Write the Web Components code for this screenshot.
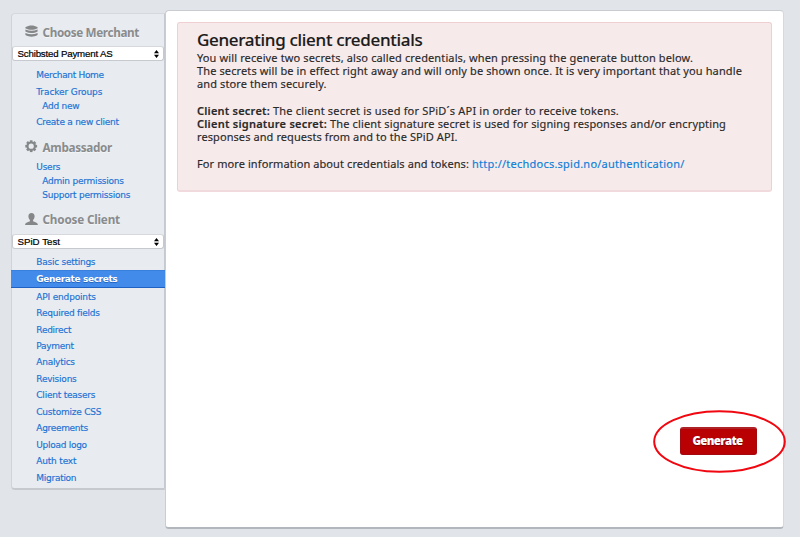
<!DOCTYPE html>
<html lang="en">
<head>
<meta charset="utf-8">
<title>Generate secrets</title>
<style>
html,body{margin:0;height:100%}
body{background:#e1e5ea;overflow:hidden;font-family:"Noto Sans","Open Sans",sans-serif}
</style>
</head>
<body>
<app-shell>
  <side-bar slot="side">
    <side-heading icon="layers" w="96.5">Choose Merchant</side-heading>
    <select-box w="95">Schibsted Payment AS</select-box>
    <nav-group style="--top:5px;--bottom:3px">
      <nav-link w="67.5" style="--h:17.5px">Merchant Home</nav-link>
      <nav-link w="66" style="--h:16px">Tracker Groups</nav-link>
      <nav-link w="37" sub style="--h:13px">Add new</nav-link>
      <nav-link w="82.5" style="--h:18px">Create a new client</nav-link>
    </nav-group>
    <side-heading icon="gear" w="69.5" style="--h:26px">Ambassador</side-heading>
    <nav-group style="--bottom:2px">
      <nav-link w="24" style="--h:14.5px">Users</nav-link>
      <nav-link w="81.5" sub style="--h:14px">Admin permissions</nav-link>
      <nav-link w="88" sub style="--h:14px">Support permissions</nav-link>
    </nav-group>
    <side-heading icon="user" w="77.5" style="--h:30px">Choose Client</side-heading>
    <select-box w="42.5">SPiD Test</select-box>
    <nav-group style="--top:5px">
      <nav-link w="59">Basic settings</nav-link>
      <nav-link w="81" active style="--h:18px">Generate secrets</nav-link>
      <nav-link w="59.5">API endpoints</nav-link>
      <nav-link w="63.5">Required fields</nav-link>
      <nav-link w="35">Redirect</nav-link>
      <nav-link w="37.5">Payment</nav-link>
      <nav-link w="38.5">Analytics</nav-link>
      <nav-link w="40.3">Revisions</nav-link>
      <nav-link w="59">Client teasers</nav-link>
      <nav-link w="65">Customize CSS</nav-link>
      <nav-link w="51.5">Agreements</nav-link>
      <nav-link w="50.5">Upload logo</nav-link>
      <nav-link w="40">Auth text</nav-link>
      <nav-link w="40">Migration</nav-link>
    </nav-group>
  </side-bar>
  <main-panel slot="main">
    <info-box></info-box>
    <action-button slot="action">Generate</action-button>
  </main-panel>
</app-shell>
<script>
const define = (name, html, setup) => customElements.define(name, class extends HTMLElement {
  connectedCallback() {
    if (this.shadowRoot) return;
    const t = document.createElement('template');
    t.innerHTML = html(this);
    this.attachShadow({mode: 'open'}).appendChild(t.content.cloneNode(true));
    if (setup) setup(this);
  }
});

/* Tracks a run of text so that it fills the width in its w attribute. */
define('fit-text', () => `<style>:host{display:inline-block;white-space:pre}</style><slot></slot>`, el => {
  const w = parseFloat(el.getAttribute('w'));
  const n = [...el.textContent].length;
  el.style.letterSpacing = '0px';
  const natural = el.getBoundingClientRect().width;
  if (w && natural) el.style.letterSpacing = ((w - natural) / n).toFixed(4) + 'px';
});

define('app-shell', () => `<style>
:host{display:grid;grid-template-columns:154px 619px;padding:10px 0 0 11px;align-items:start}
.side{padding-top:3px}
</style><div class="side"><slot name="side"></slot></div><slot name="main"></slot>`);

define('side-bar', () => `<style>
:host{display:block;box-sizing:border-box;height:477px;padding-top:3px;background:#e8ebf0;border:1px solid #d0d4da;border-top-color:#d5d8dd;border-bottom:2px solid #c6cacf;border-right-color:#c5cad1;border-radius:4px 0 0 4px}
</style><slot></slot>`);

const icons = {
  layers: '<path d="M.4 2.200C2.500 1 4.500.4 6.500.4s4 .6 6.100 1.800v1C10.500 4.300 8.500 4.800 6.500 4.800S2.500 4.300.4 3.200zM.4 4.600c4 1.700 8.200 1.700 12.200 0v1.900c-4 2.100-8.200 2.100-12.200 0zM.4 8c4 1.800 8.200 1.800 12.200 0v1.900c-4 2.300-8.200 2.300-12.200 0z"/>',
  gear: '<g transform="translate(6.200 6.200)"><circle r="3.700" fill="none" stroke="#858789" stroke-width="2.200"/><g><rect id="t" x="-1.300" y="-5.900" width="2.600" height="2"/><rect x="-1.300" y="-5.900" width="2.600" height="2" transform="rotate(45)"/><rect x="-1.300" y="-5.900" width="2.600" height="2" transform="rotate(90)"/><rect x="-1.300" y="-5.900" width="2.600" height="2" transform="rotate(135)"/><rect x="-1.300" y="-5.900" width="2.600" height="2" transform="rotate(180)"/><rect x="-1.300" y="-5.900" width="2.600" height="2" transform="rotate(225)"/><rect x="-1.300" y="-5.900" width="2.600" height="2" transform="rotate(270)"/><rect x="-1.300" y="-5.900" width="2.600" height="2" transform="rotate(315)"/></g></g>',
  user: '<path d="M6.500 0C4.300 0 3.300 1.500 3.400 3.500c.1 1.500.7 2.700 1.500 3.400v1.300C3.800 9.200.1 9 .1 12.200h12.800c0-3.200-3.700-3-4.800-4V6.900c.8-.7 1.400-1.900 1.500-3.400C9.700 1.500 8.700 0 6.500 0z"/>'
};
define('side-heading', el => `<style>
:host{display:flex;align-items:center;height:var(--h,29px);padding-left:12.500px;gap:5px;color:#898b8d;font:700 11.700px "Noto Sans","Open Sans",sans-serif;text-shadow:0 1px #fff8}
svg{width:13px;height:12.500px;fill:#858789;flex:none}
</style><svg viewBox="0 0 13 12.500">${icons[el.getAttribute('icon')]}</svg><fit-text w="${el.getAttribute('w')}">${el.textContent}</fit-text>`);

define('select-box', el => `<style>
:host{display:flex;align-items:center;justify-content:space-between;box-sizing:border-box;height:15px;padding:0 4px 0 4.500px;background:#fff;border:1px solid #c6c9cd;border-top-color:#d6d8db;border-radius:3px;color:#000;font:9.700px "Liberation Sans",sans-serif;-webkit-text-stroke:.2px #000}
svg{width:5px;height:8px}
</style><fit-text w="${el.getAttribute('w')}">${el.textContent}</fit-text><svg viewBox="0 0 5 8"><path d="M2.500 0 5 3.200H0zM0 4.800h5L2.500 8z"/></svg>`);

define('nav-group', () => `<style>:host{display:block;padding-top:var(--top,0px);padding-bottom:var(--bottom,0px)}</style><slot></slot>`);

define('nav-link', el => `<style>
:host{display:flex;align-items:center;box-sizing:border-box;height:var(--h,16.460px);padding-left:24.300px;color:#1a72d4;font:9px "DejaVu Sans",sans-serif;-webkit-text-stroke:.15px #1a72d4}
:host([sub]){padding-left:30.300px}
:host([active]){margin:0 -1px;padding-left:25.300px;background:#428bea;border-bottom:1px solid #1f62c4;border-top:1px solid #397fdc;color:#fff;font-weight:bold;-webkit-text-stroke:0;text-shadow:0 1px #2567c0}
</style><fit-text w="${el.getAttribute('w')}">${el.textContent}</fit-text>`);

define('main-panel', () => `<style>
:host{display:flex;flex-direction:column;justify-content:space-between;box-sizing:border-box;height:519px;padding:11px 11px 72px;background:#fff;border:1px solid #c9ccd1;border-right-color:#d5d8dd;border-bottom:2px solid #b2b6bd;border-radius:4px}
.act{display:flex;justify-content:flex-end;padding-right:15px}
</style><slot></slot><div class="act"><slot name="action"></slot></div>`);

define('info-box', () => `<style>
:host{display:block;box-sizing:border-box;height:170px;padding:7px 0 0 19px;background:#f7eaea;border:1px solid #efcfd2;border-bottom:2px solid #f1dadd;border-radius:3px;color:#292929;font:11px/13.330px "Noto Sans","Open Sans",sans-serif;-webkit-text-stroke:.15px}
h1{margin:0;font:500 17px/20.500px "Noto Sans","Open Sans",sans-serif;color:#1b1b1b;white-space:nowrap}
p{margin:0 0 13.330px;white-space:nowrap}
p>span{display:flex;height:13.330px}
b{font-weight:600;margin-right:3px}
a{color:#0a7fd9}
.gap{margin-right:3px}
</style>
<h1><fit-text w="225.500">Generating client credentials</fit-text></h1>
<p><span><fit-text w="496">You will receive two secrets, also called credentials, when pressing the generate button below.</fit-text></span>
<span><fit-text w="545">The secrets will be in effect right away and will only be shown once. It is very important that you handle</fit-text></span>
<span><fit-text w="129.500">and store them securely.</fit-text></span></p>
<p><span><b><fit-text w="73">Client secret:</fit-text></b><fit-text w="346">The client secret is used for SPiD´s API in order to receive tokens.</fit-text></span>
<span><b><fit-text w="130">Client signature secret:</fit-text></b><fit-text w="396">The client signature secret is used for signing responses and/or encrypting</fit-text></span>
<span><fit-text w="260.500">responses and requests from and to the SPiD API.</fit-text></span></p>
<p><span><fit-text class="gap" w="272">For more information about credentials and tokens:</fit-text><a><fit-text w="212.500">http://techdocs.spid.no/authentication/</fit-text></a></span></p>`);

define('action-button', el => `<style>
:host{position:relative;display:flex;align-items:center;justify-content:center;box-sizing:border-box;width:77px;height:28px;background:#b90003;border:1px solid #a30a10;border-top:2px solid #ae2328;border-radius:3px;color:#fff;font:800 11.500px "Open Sans","Noto Sans",sans-serif;text-shadow:0 1px 1px #700}
fit-text{margin:-2px 2px 0 0}
svg{position:absolute;left:-28.500px;top:-19px;width:133px;height:63px;overflow:visible;fill:none;stroke:#f00710;stroke-width:2}
</style><fit-text w="50">${el.textContent}</fit-text><svg viewBox="0 0 133 63"><ellipse cx="66.500" cy="31.500" rx="65.300" ry="30.300"/></svg>`);
</script>
</body>
</html>
